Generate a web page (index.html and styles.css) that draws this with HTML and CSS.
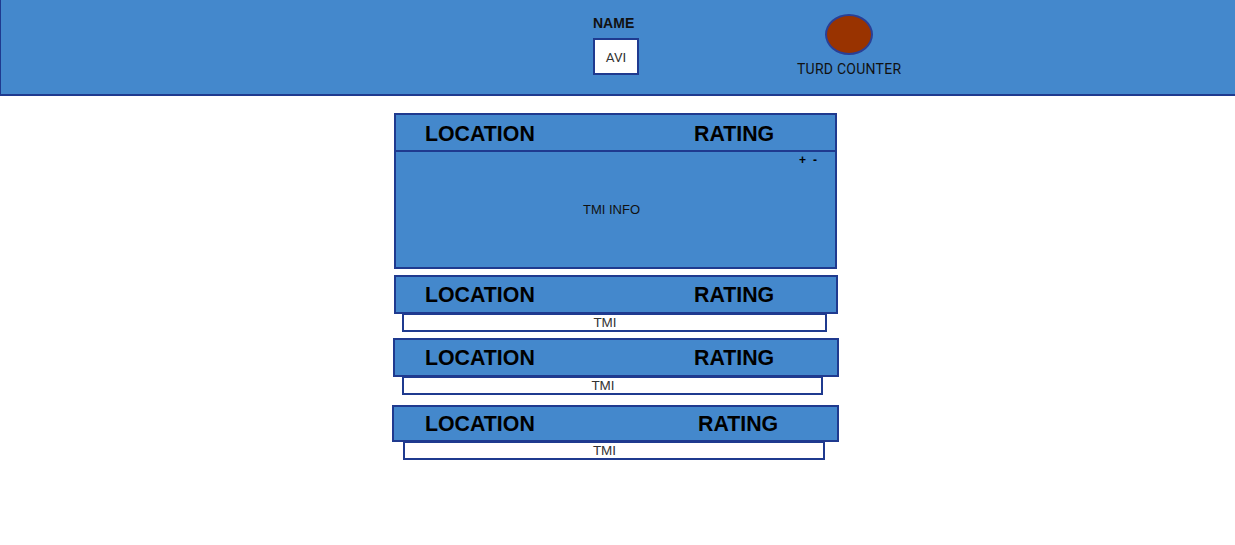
FILE: index.html
```html
<!DOCTYPE html>
<html lang="en">
<head>
<meta charset="utf-8">
<title>Turd Tracker</title>
<link rel="stylesheet" href="styles.css">
</head>
<body>
<header class="topbar">
  <div class="name-block">
    <div class="name-label">NAME</div>
    <div class="name-box">AVI</div>
  </div>
  <div class="counter-block">
    <div class="counter-dot"></div>
    <div class="counter-label">TURD COUNTER</div>
  </div>
</header>
<main class="feed">
  <section class="card card-open">
    <div class="card-head">
      <span class="loc">LOCATION</span>
      <span class="rating">RATING</span>
    </div>
    <div class="card-body">
      <div class="vote"><span>+</span><span>-</span></div>
      <span class="tmi-info">TMI INFO</span>
    </div>
  </section>
  <section class="entry entry-2">
    <div class="card-head">
      <span class="loc">LOCATION</span>
      <span class="rating">RATING</span>
    </div>
    <div class="tmi">TMI</div>
  </section>
  <section class="entry entry-3">
    <div class="card-head">
      <span class="loc">LOCATION</span>
      <span class="rating">RATING</span>
    </div>
    <div class="tmi">TMI</div>
  </section>
  <section class="entry entry-4">
    <div class="card-head">
      <span class="loc">LOCATION</span>
      <span class="rating">RATING</span>
    </div>
    <div class="tmi">TMI</div>
  </section>
</main>
</body>
</html>
```
FILE: styles.css
```css
* { box-sizing: border-box; }
html, body { margin: 0; padding: 0; background: #fff; }
body {
  font-family: "Liberation Sans", Arial, sans-serif;
  color: #000;
  width: 1235px;
  height: 545px;
  overflow: hidden;
}

.topbar {
  height: 96px;
  background: #4488cc;
  border-left: 1px solid #1f3a8f;
  border-bottom: 2px solid #1f3a8f;
  display: flex;
  align-items: flex-start;
  padding-left: 592px;
}

.name-block {
  display: flex;
  flex-direction: column;
  align-items: flex-start;
  padding-top: 15px;
}
.name-label {
  font-weight: bold;
  font-size: 14px;
  line-height: 16px;
  color: #111;
}
.name-box {
  margin-top: 7px;
  width: 46px;
  height: 37px;
  background: #fff;
  border: 2px solid #1f3a8f;
  display: flex;
  align-items: center;
  justify-content: center;
  font-family: Roboto, "Liberation Sans", sans-serif;
  font-size: 13.5px;
  padding-top: 1px;
  color: #333;
}

.counter-block {
  margin-left: 158px;
  display: flex;
  flex-direction: column;
  align-items: center;
  padding-top: 14px;
}
.counter-dot {
  width: 48px;
  height: 41px;
  border-radius: 50%;
  background: #993300;
  border: 2px solid #2a3f95;
}
.counter-label {
  margin-top: 6px;
  font-family: Roboto, "Liberation Sans", sans-serif;
  font-size: 14px;
  letter-spacing: 0.25px;
  line-height: 16px;
  color: #111;
}

.feed {
  display: flex;
  flex-direction: column;
  align-items: flex-start;
  padding-top: 17px;
}

.card-head {
  display: grid;
  grid-template-columns: 269px auto;
  align-items: center;
  font-weight: bold;
  font-size: 21.33px;
  line-height: 24px;
  color: #000;
}

.card-open {
  margin-left: 394px;
  width: 443px;
  border: 2px solid #1f3a8f;
  background: #4488cc;
}
.card-open .card-head {
  height: 37px;
  border-bottom: 2px solid #1f3a8f;
  padding-left: 29px;
  padding-top: 2px;
}
.card-body {
  position: relative;
  height: 115px;
  display: flex;
  align-items: center;
  justify-content: center;
  padding-right: 8px;
}
.tmi-info {
  font-size: 13px;
  color: #111;
}
.vote {
  position: absolute;
  top: 1px;
  right: 18px;
  display: flex;
  gap: 7px;
  font-weight: bold;
  font-size: 12px;
  line-height: 14px;
}

.entry {
  display: flex;
  flex-direction: column;
  align-items: flex-start;
}
.entry .card-head {
  background: #4488cc;
  border: 2px solid #1f3a8f;
  height: 39px;
  padding-top: 1px;
}
.tmi {
  height: 18px;
  background: #fff;
  border: 2px solid #1f3a8f;
  border-top-width: 1px;
  font-size: 13.5px;
  line-height: 16px;
  color: #333;
  text-align: center;
  padding-right: 19px;
}

.entry-2 { margin-top: 6px; margin-left: 394px; }
.entry-2 .card-head { width: 444px; padding-left: 29px; }
.entry-2 .tmi { width: 425px; margin-left: 8px; }

.entry-3 { margin-top: 6px; margin-left: 393px; }
.entry-3 .card-head { width: 446px; padding-left: 30px; }
.entry-3 .tmi { width: 421px; margin-left: 9px; }

.entry-4 { margin-top: 10px; margin-left: 392px; }
.entry-4 .card-head { width: 447px; height: 37px; padding-left: 31px; grid-template-columns: 273px auto; }
.entry-4 .tmi { width: 422px; margin-left: 11px; }
```
